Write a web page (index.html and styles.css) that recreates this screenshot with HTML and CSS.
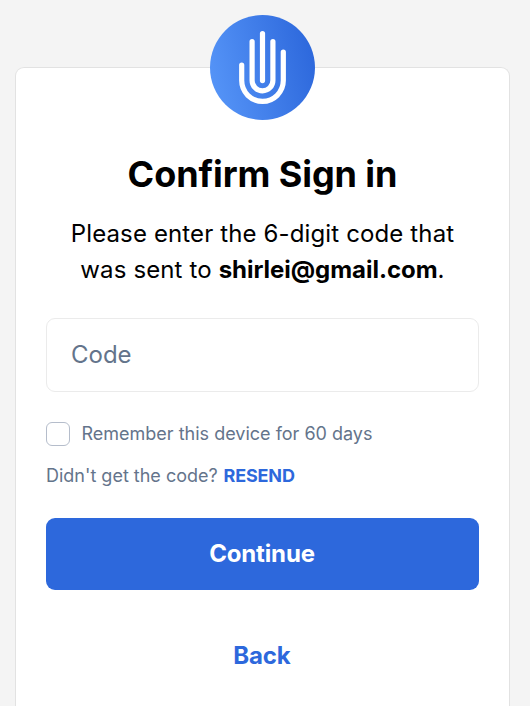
FILE: index.html
```html
<!DOCTYPE html>
<html lang="en">
<head>
<meta charset="utf-8">
<title>Confirm Sign in</title>
<link rel="stylesheet" href="styles.css">
</head>
<body>
<main class="card">
<svg class="logo" viewBox="0 0 105 105" aria-hidden="true">
<defs><linearGradient id="blue" x1="0" y1=".62" x2="1" y2=".38"><stop offset="0" stop-color="#5594f7"/><stop offset="1" stop-color="#2d68dc"/></linearGradient></defs>
<circle cx="52.500" cy="52.500" r="52.500" fill="url(#blue)"/>
<g fill="none" stroke="#fff" stroke-width="5.200" stroke-linecap="round">
<path d="M31.700 50v15.600a20.800 20.800 0 0 0 41.600 0V37"/>
<path d="M42.100 26.600v38.800a10.400 10.400 0 0 0 20.800 0V26.600"/>
<path d="M52.500 18.600v47"/>
</g>
</svg>
<h1 class="title">Confirm Sign in</h1>
<p class="intro">Please enter the 6-digit code that<br>was sent to <strong>shirlei@gmail.com</strong>.</p>
<form class="form">
<input class="code" type="text" placeholder="Code" aria-label="Code">
<label class="remember"><input class="check" type="checkbox"><span>Remember this device for 60 days</span></label>
<p class="resend">Didn't get the code? <a class="link">RESEND</a></p>
<button class="submit" type="button">Continue</button>
<a class="back">Back</a>
</form>
</main>
</body>
</html>
```
FILE: styles.css
```css
* { box-sizing: border-box; }
body { margin: 0; height: 706px; display: flow-root; background: #f4f4f4; font-family: Inter, sans-serif; color: #000; }
.card { margin: 67px 20px 0 15px; height: 639px; padding: 0 30px; background: #fff; border: 1px solid #e2e2e2; border-bottom: 0; border-radius: 9px 9px 0 0; display: flex; flex-direction: column; align-items: center; }
.logo { width: 105px; height: 105px; margin-top: -53px; flex: none; }
.title { margin: 30px 0 0; font-size: 36px; line-height: 48px; font-weight: 700; letter-spacing: -0.08px; white-space: nowrap; }
.intro { margin: 18px 0 0; font-size: 24px; line-height: 36px; letter-spacing: 0.13px; text-align: center; white-space: nowrap; }
.intro strong { font-weight: 700; letter-spacing: -0.03px; }
.form { width: 100%; margin-top: 30px; display: flex; flex-direction: column; }
.code { height: 74px; padding: 0 24px 2px; border: 1px solid #ebebeb; border-radius: 9px; font: 24px Inter, sans-serif; outline: none; }
.code::placeholder { color: #64748b; opacity: 1; }
.remember { display: flex; align-items: center; gap: 12px; margin-top: 30px; height: 24px; font-size: 18px; color: #64748b; }
.remember span { padding-bottom: 2px; margin-left: -0.5px; }
.check { appearance: none; width: 24px; height: 24px; margin: 0; border: 1px solid #b5bdcb; border-radius: 6px; background: #fff; }
.resend { margin: 16px 0 0; font-size: 18px; line-height: 28px; color: #64748b; }
.link { margin-left: 0.7px; color: #2d68dc; font-weight: 700; letter-spacing: -0.15px; }
.submit { margin-top: 28px; height: 72px; padding: 0 1px 2px 0; border: 0; border-radius: 9px; background: #2d68dc; color: #fff; font: 700 24px Inter, sans-serif; letter-spacing: -0.15px; }
.back { align-self: center; margin: 48px 1px 0 0; font-size: 24px; line-height: 36px; font-weight: 700; letter-spacing: -0.15px; color: #2d68dc; }
```
